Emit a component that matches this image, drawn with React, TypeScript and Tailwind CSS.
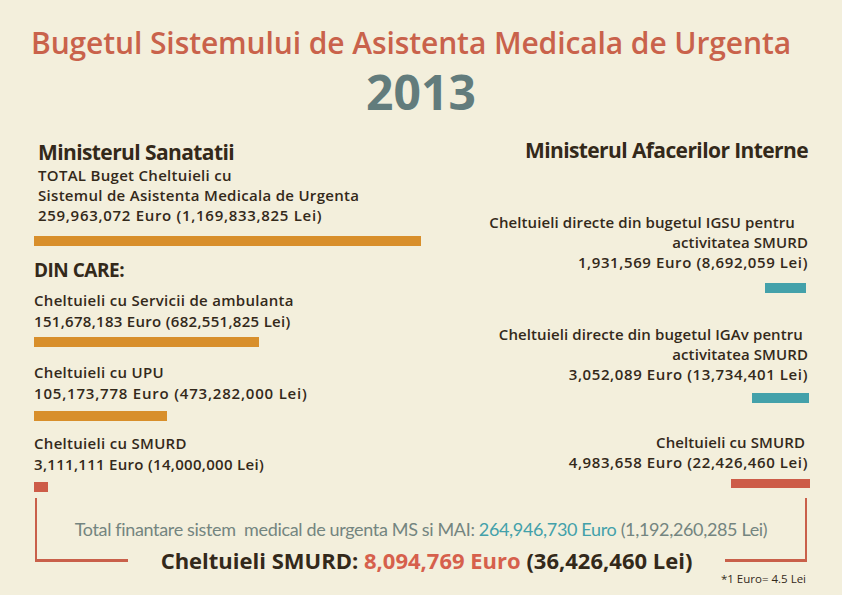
const font = { fontFamily: "'Open Sans', Lato, sans-serif" };

function Bar({ className }: { className: string }) {
  return <div className={className} />;
}

export default function App() {
  return (
    <div className="w-[842px] h-[595px] overflow-hidden bg-[#f3efdc] text-[#33291a]" style={font}>
      {/* Title */}
      <div className="pt-[25px] flex flex-col items-center">
        <h1 className="mr-[20px] text-[30px] leading-[36px] font-semibold tracking-[-0.1px] text-[#c9624b]">
          Bugetul Sistemului de Asistenta Medicala de Urgenta
        </h1>
        <div className="mt-[7px] text-[48px] leading-[48px] font-bold text-[#627c7c]">2013</div>
      </div>

      <div className="flex justify-between">
        {/* Ministerul Sanatatii */}
        <div className="pl-[34px] flex flex-col items-start">
          <h2 className="mt-[24px] ml-[4px] text-[21px] leading-[24px] font-bold tracking-[-0.6px]">Ministerul Sanatatii</h2>
          <div className="mt-[1px] ml-[4px] text-[15px] leading-[20px] font-semibold tracking-[0.3px]">
            <div>TOTAL Buget Cheltuieli cu</div>
            <div>Sistemul de Asistenta Medicala de Urgenta</div>
            <div className="tracking-[0.7px]">259,963,072 Euro (1,169,833,825 Lei)</div>
          </div>
          <Bar className="mt-[11px] h-[10px] w-[387px] bg-[#d88f2b]" />

          <h3 className="mt-[12px] text-[19px] leading-[24px] font-bold tracking-[-0.5px]">DIN CARE:</h3>

          <div className="mt-[8px] text-[15px] leading-[21px] font-semibold tracking-[0.3px]">
            <div>Cheltuieli cu Servicii de ambulanta</div>
            <div>151,678,183 Euro (682,551,825 Lei)</div>
          </div>
          <Bar className="mt-[5px] h-[10px] w-[225px] bg-[#d88f2b]" />

          <div className="mt-[15px] text-[15px] leading-[21px] font-semibold tracking-[0.3px]">
            <div>Cheltuieli cu UPU</div>
            <div className="tracking-[0.8px]">105,173,778 Euro (473,282,000 Lei)</div>
          </div>
          <Bar className="mt-[7px] h-[10px] w-[133px] bg-[#d88f2b]" />

          <div className="mt-[12px] text-[15px] leading-[21px] font-semibold tracking-[0.3px]">
            <div>Cheltuieli cu SMURD</div>
            <div>3,111,111 Euro (14,000,000 Lei)</div>
          </div>
          <Bar className="mt-[7px] h-[10px] w-[14px] bg-[#cd5c48]" />
        </div>

        {/* Ministerul Afacerilor Interne */}
        <div className="pr-[34px] flex flex-col items-end text-right">
          <h2 className="mt-[22px] text-[21px] leading-[24px] font-bold tracking-[-0.6px]">Ministerul Afacerilor Interne</h2>

          <div className="mt-[50px] text-[15px] leading-[20px] font-semibold tracking-[0.1px]">
            <div className="pr-[13px]">Cheltuieli directe din bugetul IGSU pentru</div>
            <div>activitatea SMURD</div>
            <div className="tracking-[0.6px]">1,931,569 Euro (8,692,059 Lei)</div>
          </div>
          <Bar className="mt-[11px] mr-[2px] h-[10px] w-[41px] bg-[#43a1aa]" />

          <div className="mt-[31px] text-[15px] leading-[20px] font-semibold tracking-[0.1px]">
            <div className="pr-[5px]">Cheltuieli directe din bugetul IGAv pentru</div>
            <div>activitatea SMURD</div>
            <div className="tracking-[0.6px]">3,052,089 Euro (13,734,401 Lei)</div>
          </div>
          <Bar className="mt-[9px] -mr-[1px] h-[10px] w-[57px] bg-[#43a1aa]" />

          <div className="mt-[29px] text-[15px] leading-[20px] font-semibold tracking-[0.1px]">
            <div className="pr-[3px]">Cheltuieli cu SMURD</div>
            <div className="tracking-[0.6px]">4,983,658 Euro (22,426,460 Lei)</div>
          </div>
          <Bar className="mt-[7px] -mr-[2px] h-[9px] w-[79px] bg-[#cd5c48]" />
        </div>
      </div>

      {/* Totals bracket */}
      <div className="mt-[6px] ml-[35px] w-[772px]">
        <div className="h-[48px] border-x-2 border-[#c9604a] flex items-end justify-center pb-[6px]">
          <p
            className="text-[18px] leading-[22px] tracking-[-0.35px] text-[#748580]"
            style={{ fontFamily: "Lato, sans-serif" }}
          >
            Total finantare sistem&nbsp; medical de urgenta MS si MAI:{" "}
            <span className="text-[#43a1aa]">264,946,730 Euro</span> (1,192,260,285 Lei)
          </p>
        </div>
        <div className="flex items-start">
          <div className="w-[93px] h-[16px] border-l-2 border-b-[3px] border-[#c9604a]" />
          <p className="flex-1 mt-[2px] text-center text-[22px] leading-[24px] font-bold">
            Cheltuieli SMURD: <span className="text-[#d6604c]">8,094,769 Euro</span> (36,426,460 Lei)
          </p>
          <div className="w-[82px] h-[16px] border-r-2 border-b-[3px] border-[#c9604a]" />
        </div>
        <div className="text-right pr-[1px] text-[11.5px] leading-[14px] font-medium">*1 Euro= 4.5 Lei</div>
      </div>
    </div>
  );
}
